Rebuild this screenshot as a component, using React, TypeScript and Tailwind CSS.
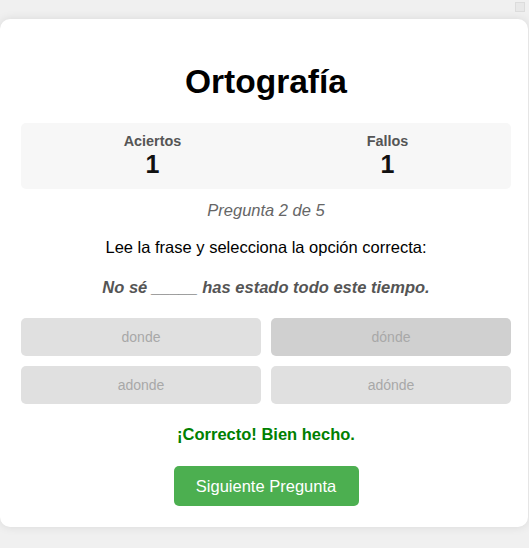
import { useState } from "react";

const options = ["donde", "dónde", "adonde", "adónde"];

export default function App() {
    const [selected] = useState("dónde");

    return (
        <div
            className="relative h-[548px] w-[529px] overflow-hidden bg-[#f0f0f0] pt-[19px]"
            style={{ fontFamily: '"Liberation Sans", Arial, sans-serif' }}
        >
            <div className="absolute right-[4px] top-[2px] h-[10px] w-[10px] border border-[#dcdcdc] bg-[#e8e8e8]" />

            <div className="flex w-[528px] flex-col rounded-[10px] bg-white pb-[21px] pl-[21px] pr-[17px] pt-[43px] shadow-[0_0_10px_rgba(0,0,0,0.1)]">
                <h1 className="text-center text-[33.5px] font-bold leading-[40px] text-black">Ortografía</h1>

                <div className="mt-[21px] flex justify-around rounded-[5px] bg-[#f7f7f7] p-[10px]">
                    <div className="flex flex-col items-center">
                        <span className="text-[14.4px] font-bold leading-[17px] text-[#555]">Aciertos</span>
                        <span className="text-[25px] font-bold leading-[29px] text-[#111]">1</span>
                    </div>
                    <div className="flex flex-col items-center">
                        <span className="text-[14.4px] font-bold leading-[17px] text-[#555]">Fallos</span>
                        <span className="text-[25px] font-bold leading-[29px] text-[#111]">1</span>
                    </div>
                </div>

                <p className="mt-[11px] text-center text-[16.5px] italic leading-[20px] text-[#666]">Pregunta 2 de 5</p>
                <p className="mt-[17px] text-center text-[16.5px] leading-[20px] text-black">
                    Lee la frase y selecciona la opción correcta:
                </p>
                <p className="mt-[20px] text-center text-[16.5px] font-bold italic leading-[20px] text-[#555]">
                    No sé _____ has estado todo este tiempo.
                </p>

                <div className="mt-[21px] grid grid-cols-2 gap-[10px]">
                    {options.map((opt) => (
                        <button
                            key={opt}
                            disabled
                            className={
                                "h-[38px] rounded-[5px] text-[14px] text-[#a8a8a8] " +
                                (opt === selected ? "bg-[#d0d0d0]" : "bg-[#e0e0e0]")
                            }
                        >
                            {opt}
                        </button>
                    ))}
                </div>

                <p className="mt-[20px] text-center text-[16.5px] font-bold leading-[20px] text-[#008000]">
                    ¡Correcto! Bien hecho.
                </p>

                <div className="mt-[22px] flex justify-center">
                    <button className="h-[40px] w-[185px] rounded-[5px] bg-[#4caf50] text-[16.5px] text-white">
                        Siguiente Pregunta
                    </button>
                </div>
            </div>
        </div>
    );
}
